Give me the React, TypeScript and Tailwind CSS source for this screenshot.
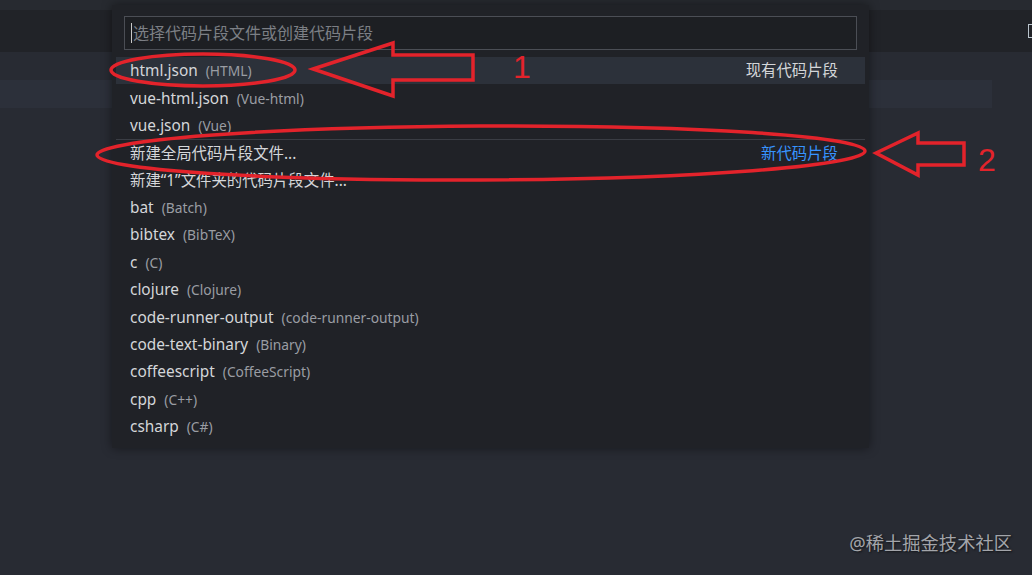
import React from 'react';

type Item = {
  label: string;
  desc?: string;
  tag?: string;
  tagBlue?: boolean;
  active?: boolean;
  separator?: boolean;
};

const items: Item[] = [
  { label: 'html.json', desc: '(HTML)', tag: '现有代码片段', active: true },
  { label: 'vue-html.json', desc: '(Vue-html)' },
  { label: 'vue.json', desc: '(Vue)' },
  { label: '新建全局代码片段文件...', tag: '新代码片段', tagBlue: true, separator: true },
  { label: '新建“1”文件夹的代码片段文件...' },
  { label: 'bat', desc: '(Batch)' },
  { label: 'bibtex', desc: '(BibTeX)' },
  { label: 'c', desc: '(C)' },
  { label: 'clojure', desc: '(Clojure)' },
  { label: 'code-runner-output', desc: '(code-runner-output)' },
  { label: 'code-text-binary', desc: '(Binary)' },
  { label: 'coffeescript', desc: '(CoffeeScript)' },
  { label: 'cpp', desc: '(C++)' },
  { label: 'csharp', desc: '(C#)' },
];

const font = { fontFamily: '"Segoe UI", "Noto Sans", "Noto Sans CJK SC", sans-serif' };

function Row({ item }: { item: Item }) {
  return (
    <div
      className={`flex h-[27.4px] items-center justify-between pl-[14px] pr-[27px] ${
        item.active ? 'bg-[#2c313a]' : ''
      } ${item.separator ? 'border-t border-[#3a3d44]' : ''}`}
    >
      <div className="flex items-baseline gap-[8px] whitespace-nowrap">
        <span className="text-[15.4px] text-[#d4d6d9]">{item.label}</span>
        {item.desc && <span className="text-[13.8px] text-[#9a9da3]">{item.desc}</span>}
      </div>
      {item.tag && (
        <span className={`text-[15.4px] ${item.tagBlue ? 'text-[#3794ff]' : 'text-[#d4d6d9]'}`}>{item.tag}</span>
      )}
    </div>
  );
}

function Annotations() {
  const red = '#e3232b';
  return (
    <svg className="pointer-events-none absolute inset-0" width="1032" height="575" viewBox="0 0 1032 575">
      <ellipse cx="203" cy="70" rx="92" ry="16" fill="none" stroke={red} strokeWidth="3.5" />
      <polygon
        points="313,69 393,43 393,55 473,55 473,80 393,80 393,96"
        fill="none"
        stroke={red}
        strokeWidth="3.5"
        strokeLinejoin="miter"
      />
      <ellipse cx="481" cy="153" rx="384" ry="27" fill="none" stroke={red} strokeWidth="3.5" transform="rotate(-0.3 481 153)" />
      <polygon
        points="876,153 918,133 918,143 964,143 964,165 918,165 918,175"
        fill="none"
        stroke={red}
        strokeWidth="3.5"
      />
      <text x="513" y="78" fill={red} fontSize="32" fontFamily="Liberation Sans, sans-serif">1</text>
      <text x="978" y="171" fill={red} fontSize="32" fontFamily="Liberation Sans, sans-serif">2</text>
    </svg>
  );
}

export default function App() {
  return (
    <div className="relative h-[575px] w-[1032px] overflow-hidden bg-[#282b33]" style={font}>
      {/* editor chrome behind the quick pick */}
      <div className="h-[10px] bg-[#272a30]" />
      <div className="flex h-[42px] items-center justify-end bg-[#212328]">
        <div className="mr-[-6px] h-[14px] w-[10px] border border-[#b9c4cc]" />
      </div>
      <div className="mt-[28px] h-[28px] w-[992px] bg-[#2c303a]" />

      {/* quick pick */}
      <div className="absolute left-[112px] top-[5px] flex h-[443px] w-[757px] flex-col bg-[#202227] shadow-[0_0_10px_rgba(0,0,0,0.45)]">
        <div className="px-[12px] pt-[11px]">
          <div className="flex h-[34px] items-center border border-[#4b4e55] bg-[#1d1f23] px-[6px]">
            <div className="mr-[1px] h-[20px] w-px bg-[#c8c8c8]" />
            <span className="text-[16px] text-[#7c7f85]">选择代码片段文件或创建代码片段</span>
          </div>
        </div>
        <div className="mt-[7px] px-[4px]">
          {items.map((it) => (
            <Row key={it.label} item={it} />
          ))}
        </div>
      </div>

      <Annotations />

      <div className="absolute bottom-[19px] right-[20px] text-[18.3px] text-[#a3a5aa] [text-shadow:1px_1px_2px_rgba(0,0,0,0.6)]">
        @稀土掘金技术社区
      </div>
    </div>
  );
}
